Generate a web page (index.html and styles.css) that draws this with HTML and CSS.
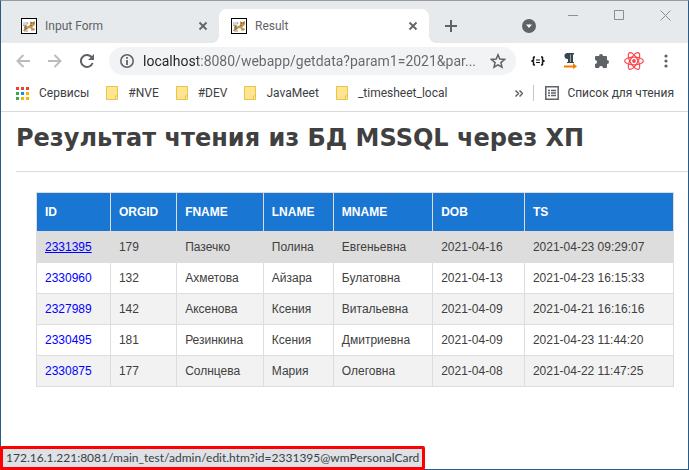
FILE: index.html
```html
<!DOCTYPE html>
<html lang="ru">
<head>
<meta charset="utf-8">
<title>Result</title>
<link rel="stylesheet" href="styles.css">
</head>
<body>
<svg class="defs" width="0" height="0" aria-hidden="true">
  <symbol id="cat" viewBox="0 0 16 16">
    <rect x=".5" y=".5" width="15" height="15" fill="#fff" stroke="#000"/>
    <path d="M2 4h3l2 2-2 2H2z" fill="#d5d5d2"/>
    <path d="M9 3l1 1h2l2-1v3l-1 2-2 1 1 1 2 1v1h-3l-2-2-3 1-2 2H2l1-2 2-2 2-1 2-1z" fill="#c6984f"/>
    <path d="M3 9l2-2 1 1-1 2 2 1-3 1zM9 7h2v1H9z" fill="#8b744f"/>
    <path d="M10 5h1M12 5h1" stroke="#59482c"/>
    <path d="M3 13h4M10 12h3" stroke="#a58a5c"/>
    <path d="M6 4l1 2M2 7l2 1" stroke="#999"/>
  </symbol>
  <symbol id="cross" viewBox="0 0 16 16">
    <path d="M4.500 4.500l7 7M11.500 4.500l-7 7" stroke="#5f6368" stroke-width="1.800"/>
  </symbol>
  <symbol id="folder" viewBox="0 0 12 14">
    <path d="M.5.5h11v9.500h-1.500v3.500H.5z" fill="#ffe591" stroke="#e8c548"/>
    <path d="M9.500 10h2v3.500h-2z" fill="#fff0b5" stroke="#e8c548"/>
  </symbol>
</svg>
<div class="window">
  <header class="strip">
    <div class="tabs" role="tablist">
      <div class="tab tab-first">
        <svg class="favicon" aria-hidden="true"><use href="#cat"/></svg>
        <button class="tab-title" role="tab" aria-selected="false">Input Form</button>
        <button class="tab-close" aria-label="Закрыть Input Form"><svg width="16" height="16"><use href="#cross"/></svg></button>
      </div>
      <div class="tab tab-active">
        <svg class="favicon" aria-hidden="true"><use href="#cat"/></svg>
        <button class="tab-title" role="tab" aria-selected="true">Result</button>
        <button class="tab-close" aria-label="Закрыть Result"><svg width="16" height="16"><use href="#cross"/></svg></button>
      </div>
    </div>
    <button class="new-tab" aria-label="Новая вкладка"><svg width="12" height="12" viewBox="0 0 12 12"><path d="M6 0v12M0 6h12" stroke="#5f6368" stroke-width="2"/></svg></button>
    <button class="tab-search" aria-label="Поиск вкладок"><svg width="14" height="14" viewBox="0 0 14 14"><circle cx="7" cy="7" r="7" fill="#5f6368"/><path d="M4 5.500h6L7 9z" fill="#fff"/></svg></button>
    <div class="controls">
      <button aria-label="Свернуть"><svg width="11" height="11" viewBox="0 0 11 11"><path d="M0 5.500h10" stroke="#8a8d91"/></svg></button>
      <button aria-label="Развернуть"><svg width="11" height="11" viewBox="0 0 11 11"><path d="M.5.5h9v9h-9z" fill="none" stroke="#8a8d91"/></svg></button>
      <button aria-label="Закрыть"><svg width="11" height="11" viewBox="0 0 11 11"><path d="M.5.5l10 10M10.500.5l-10 10" stroke="#8a8d91"/></svg></button>
    </div>
  </header>

  <div class="toolbar">
    <button class="tool" aria-label="Назад"><svg width="14" height="14" viewBox="0 0 14 14"><path d="M14 7H1.500M7.500 1l-6 6 6 6" fill="none" stroke="#babcbe" stroke-width="2"/></svg></button>
    <button class="tool" aria-label="Вперёд"><svg width="14" height="14" viewBox="0 0 14 14"><path d="M0 7h12.500M6.500 1l6 6-6 6" fill="none" stroke="#babcbe" stroke-width="2"/></svg></button>
    <button class="tool" aria-label="Обновить"><svg width="14" height="14" viewBox="0 0 14 14"><path d="M12.600 9A6 6 0 1 1 11.300 2.800L12 3.500" fill="none" stroke="#5f6368" stroke-width="2"/><path d="M14 0v6H8z" fill="#5f6368"/></svg></button>
    <div class="address">
      <svg width="14" height="14" viewBox="0 0 14 14" aria-hidden="true"><circle cx="7" cy="7" r="6.200" fill="none" stroke="#5f6368" stroke-width="1.600"/><path d="M7 3v1.700M7 6v5" stroke="#5f6368" stroke-width="1.800"/></svg>
      <input class="url" type="text" aria-label="Адрес" value="localhost:8080/webapp/getdata?param1=2021&amp;par...">
      <button class="star" aria-label="Добавить в закладки"><svg width="16" height="16" viewBox="0 0 16 16"><path d="M8 1.800l1.800 4.300 4.700.4-3.600 3.100 1.100 4.600L8 11.800l-4 2.400 1.100-4.600L1.500 6.500l4.700-.4z" fill="none" stroke="#5f6368" stroke-width="1.500"/></svg></button>
    </div>
    <button class="tool" aria-label="JSON"><svg width="14" height="10" viewBox="0 0 14 10"><path d="M4 1H3L2.500 1.500V4L1 5l1.500 1v2.500L3 9h1M10 1h1l.5.5V4L13 5l-1.500 1v2.500L11 9h-1" fill="none" stroke="#111" stroke-width="1.500"/><path d="M5 4h4M5 6.500h4" stroke="#111" stroke-width="1.200"/></svg></button>
    <button class="tool" aria-label="Направление текста"><svg width="14" height="16" viewBox="0 0 14 16"><path d="M4 0h7v1.500h-1V9h1v1H7V9h.5V1.500H7V9h.5v1H4V9h1V6a3 3 0 0 1-1-6z" fill="#37474f"/><path d="M1 12.500h9V10l4 3.500-4 2.500v-1.500H1z" fill="#f57c00"/></svg></button>
    <button class="tool" aria-label="Расширения"><svg width="16" height="16" viewBox="0 0 16 16"><path d="M5 3a2 2 0 0 1 4 0h3a1 1 0 0 1 1 1v3a2 2 0 0 1 0 4v3a1 1 0 0 1-1 1H9a2 2 0 0 0-4 0H2a1 1 0 0 1-1-1v-3a2 2 0 0 0 0-4V4a1 1 0 0 1 1-1z" fill="#5f6368"/></svg></button>
    <button class="tool" aria-label="React"><svg width="20" height="20" viewBox="0 0 20 20"><g fill="none" stroke="#fa484b" stroke-width="1.200"><ellipse cx="10" cy="10" rx="9.400" ry="3.800"/><ellipse cx="10" cy="10" rx="9.400" ry="3.800" transform="rotate(60 10 10)"/><ellipse cx="10" cy="10" rx="9.400" ry="3.800" transform="rotate(120 10 10)"/></g><circle cx="10" cy="10" r="1.900" fill="#fa484b"/></svg></button>
    <button class="tool" aria-label="Меню"><svg width="4" height="14" viewBox="0 0 4 14"><g fill="#5f6368"><circle cx="2" cy="2" r="1.600"/><circle cx="2" cy="7" r="1.600"/><circle cx="2" cy="12" r="1.600"/></g></svg></button>
  </div>

  <nav class="bookmarks">
    <a class="bookmark apps" href="#"><svg width="13" height="13" viewBox="0 0 13 13"><path d="M0 0h3v3H0zM5 0h3v3H5zM10 0h3v3h-3z" fill="#ea4335"/><path d="M0 5h3v3H0zM0 10h3v3H0z" fill="#34a853"/><path d="M5 5h3v3H5z" fill="#1a8cf0"/><path d="M10 5h3v3h-3zM5 10h3v3H5zM10 10h3v3h-3z" fill="#fbb300"/></svg>Сервисы</a>
    <a class="bookmark" href="#"><svg width="12" height="14"><use href="#folder"/></svg>#NVE</a>
    <a class="bookmark" href="#"><svg width="12" height="14"><use href="#folder"/></svg>#DEV</a>
    <a class="bookmark" href="#"><svg width="12" height="14"><use href="#folder"/></svg>JavaMeet</a>
    <a class="bookmark" href="#"><svg width="12" height="14"><use href="#folder"/></svg>_timesheet_local</a>
    <button class="more" aria-label="Другие закладки"><svg width="8" height="7" viewBox="0 0 8 7"><path d="M.5.5l3 3-3 3M4.500.5l3 3-3 3" fill="none" stroke="#5f6368" stroke-width="1.500"/></svg></button>
    <button class="reading"><svg width="14" height="14" viewBox="0 0 14 14"><path d="M.8.8h12.400v12.400H.8z" fill="none" stroke="#5f6368" stroke-width="1.500"/><path d="M3 4.500h2M6 4.500h5M3 7h2M6 7h5M3 9.500h2M6 9.500h5" stroke="#5f6368" stroke-width="1.300"/></svg>Список для чтения</button>
  </nav>

  <main class="page">
    <h1>Результат чтения из БД MSSQL через ХП</h1>
    <table>
      <colgroup><col class="c-id"><col class="c-org"><col class="c-fname"><col class="c-lname"><col class="c-mname"><col class="c-dob"><col></colgroup>
      <thead>
        <tr><th>ID</th><th>ORGID</th><th>FNAME</th><th>LNAME</th><th>MNAME</th><th>DOB</th><th>TS</th></tr>
      </thead>
      <tbody>
        <tr class="hovered"><td><a href="#">2331395</a></td><td>179</td><td>Пазечко</td><td>Полина</td><td>Евгеньевна</td><td>2021-04-16</td><td>2021-04-23 09:29:07</td></tr>
        <tr><td><a href="#">2330960</a></td><td>132</td><td>Ахметова</td><td>Айзара</td><td>Булатовна</td><td>2021-04-13</td><td>2021-04-23 16:15:33</td></tr>
        <tr><td><a href="#">2327989</a></td><td>142</td><td>Аксенова</td><td>Ксения</td><td>Витальевна</td><td>2021-04-09</td><td>2021-04-21 16:16:16</td></tr>
        <tr><td><a href="#">2330495</a></td><td>181</td><td>Резинкина</td><td>Ксения</td><td>Дмитриевна</td><td>2021-04-09</td><td>2021-04-23 11:44:20</td></tr>
        <tr><td><a href="#">2330875</a></td><td>177</td><td>Солнцева</td><td>Мария</td><td>Олеговна</td><td>2021-04-08</td><td>2021-04-22 11:47:25</td></tr>
      </tbody>
    </table>
  </main>
  <div class="status">172.16.1.221:8081/main_test/admin/edit.htm?id=2331395@wmPersonalCard</div>
</div>
</body>
</html>
```
FILE: styles.css
```css
* { box-sizing: border-box; }

body {
  margin: 0;
  font: 12px/16px Roboto, "Open Sans", sans-serif;
  color: #3c4043;
}

button {
  padding: 0;
  border: 0;
  background: none;
  font: inherit;
  color: inherit;
}

svg { display: block; flex: none; }
.defs { position: absolute; }

.window {
  position: relative;
  display: flex;
  flex-direction: column;
  min-height: 100vh;
  border: 1px solid #2b5a85;
  border-top-color: #9a9ca0;
  background: #fff;
}

/* Tab strip */
.strip {
  display: flex;
  height: 42px;
  background: #e7eaed;
}

.tabs {
  display: flex;
  flex: 0 1 428px;
  padding-top: 8px;
}

.tab {
  display: flex;
  align-items: center;
  gap: 8px;
  flex: 1 1 210px;
  padding: 0 8px 0 12px;
  color: #5f6368;
}

.tab-first { flex-basis: 218px; padding-left: 20px; }

.tab-active {
  position: relative;
  border-radius: 8px 8px 0 0;
  background: #fff;
}

.tab-active::before,
.tab-active::after {
  content: "";
  position: absolute;
  bottom: 0;
  width: 8px;
  height: 8px;
}
.tab-active::before { right: 100%; background: radial-gradient(circle at 0 0, transparent 8px, #fff 8px); }
.tab-active::after { left: 100%; background: radial-gradient(circle at 100% 0, transparent 8px, #fff 8px); }

.favicon { width: 16px; height: 16px; }
.tab-title { flex: 1; text-align: left; white-space: nowrap; }

.new-tab {
  display: grid;
  place-items: center;
  width: 28px;
  margin: 8px 0 0 8px;
}

.tab-search {
  display: grid;
  place-items: center;
  width: 28px;
  margin: 8px 7px 0 auto;
}

.controls { display: flex; }
.controls button {
  display: grid;
  place-items: center;
  width: 46px;
  height: 28px;
}

/* Toolbar */
.toolbar {
  display: flex;
  align-items: center;
  height: 36px;
  padding: 0 6px;
}

.tool {
  display: grid;
  place-items: center;
  width: 32px;
  height: 28px;
}

.address {
  display: flex;
  align-items: center;
  gap: 9px;
  flex: 1;
  min-width: 0;
  height: 28px;
  margin: 0 6px;
  padding: 0 10px 0 11px;
  border-radius: 14px;
  background: #f1f3f4;
}

/* The host part of the URL is darker than the rest */
.url {
  flex: 1;
  min-width: 0;
  height: 24px;
  padding: 0;
  border: 0;
  outline: 0;
  background: linear-gradient(to right, #202124 55px, #63676b 55px);
  background-clip: text;
  color: transparent;
  font: 14px/24px Roboto, "Open Sans", sans-serif;
  text-overflow: ellipsis;
}

/* Bookmarks bar */
.bookmarks {
  display: flex;
  align-items: center;
  gap: 17px;
  height: 33px;
  padding: 0 14px 4px 15px;
  border-bottom: 1px solid #d9dadc;
  white-space: nowrap;
}

.bookmark {
  display: flex;
  align-items: center;
  gap: 10px;
  color: inherit;
  text-decoration: none;
}

.more { margin-left: auto; }

.reading {
  display: flex;
  align-items: center;
  gap: 8px;
  height: 16px;
  margin-left: -7px;
  padding-left: 11px;
  border-left: 1px solid #c4c7ca;
}

/* Page */
.page {
  flex: 1;
  padding-left: 15px;
  color: #404040;
}

h1 {
  margin: 0 0 20px;
  padding: 9px 0 16px;
  border-bottom: 1px solid #dcdcdc;
  font: bold 24px/34px "DejaVu Sans", Verdana, sans-serif;
}

table {
  width: calc(100% - 34px);
  margin: 0 14px 60px 20px;
  border-collapse: collapse;
  table-layout: fixed;
  font: 12px/14px "Liberation Sans", Arial, sans-serif;
}

.c-id { width: 11.6%; }
.c-org { width: 10.4%; }
.c-fname { width: 13.6%; }
.c-lname { width: 11%; }
.c-mname { width: 15.6%; }
.c-dob { width: 14.4%; }

th, td {
  padding: 8px;
  border: 1px solid #ddd;
  text-align: left;
}

th {
  padding: 12px 8px;
  background: #1976d2;
  color: #fff;
}

tbody tr:nth-child(odd) { background: #f2f2f2; }
tbody tr.hovered { background: #ddd; }

td a { color: #00f; text-decoration: none; }
.hovered a { text-decoration: underline; }

/* Link target shown over the page */
.status {
  position: absolute;
  left: -1px;
  bottom: -1px;
  padding: 1px 3px;
  border: 3px solid #f00;
  border-radius: 2px;
  background: #dee1e6;
  font-family: Lato, "Open Sans", sans-serif;
}
```
